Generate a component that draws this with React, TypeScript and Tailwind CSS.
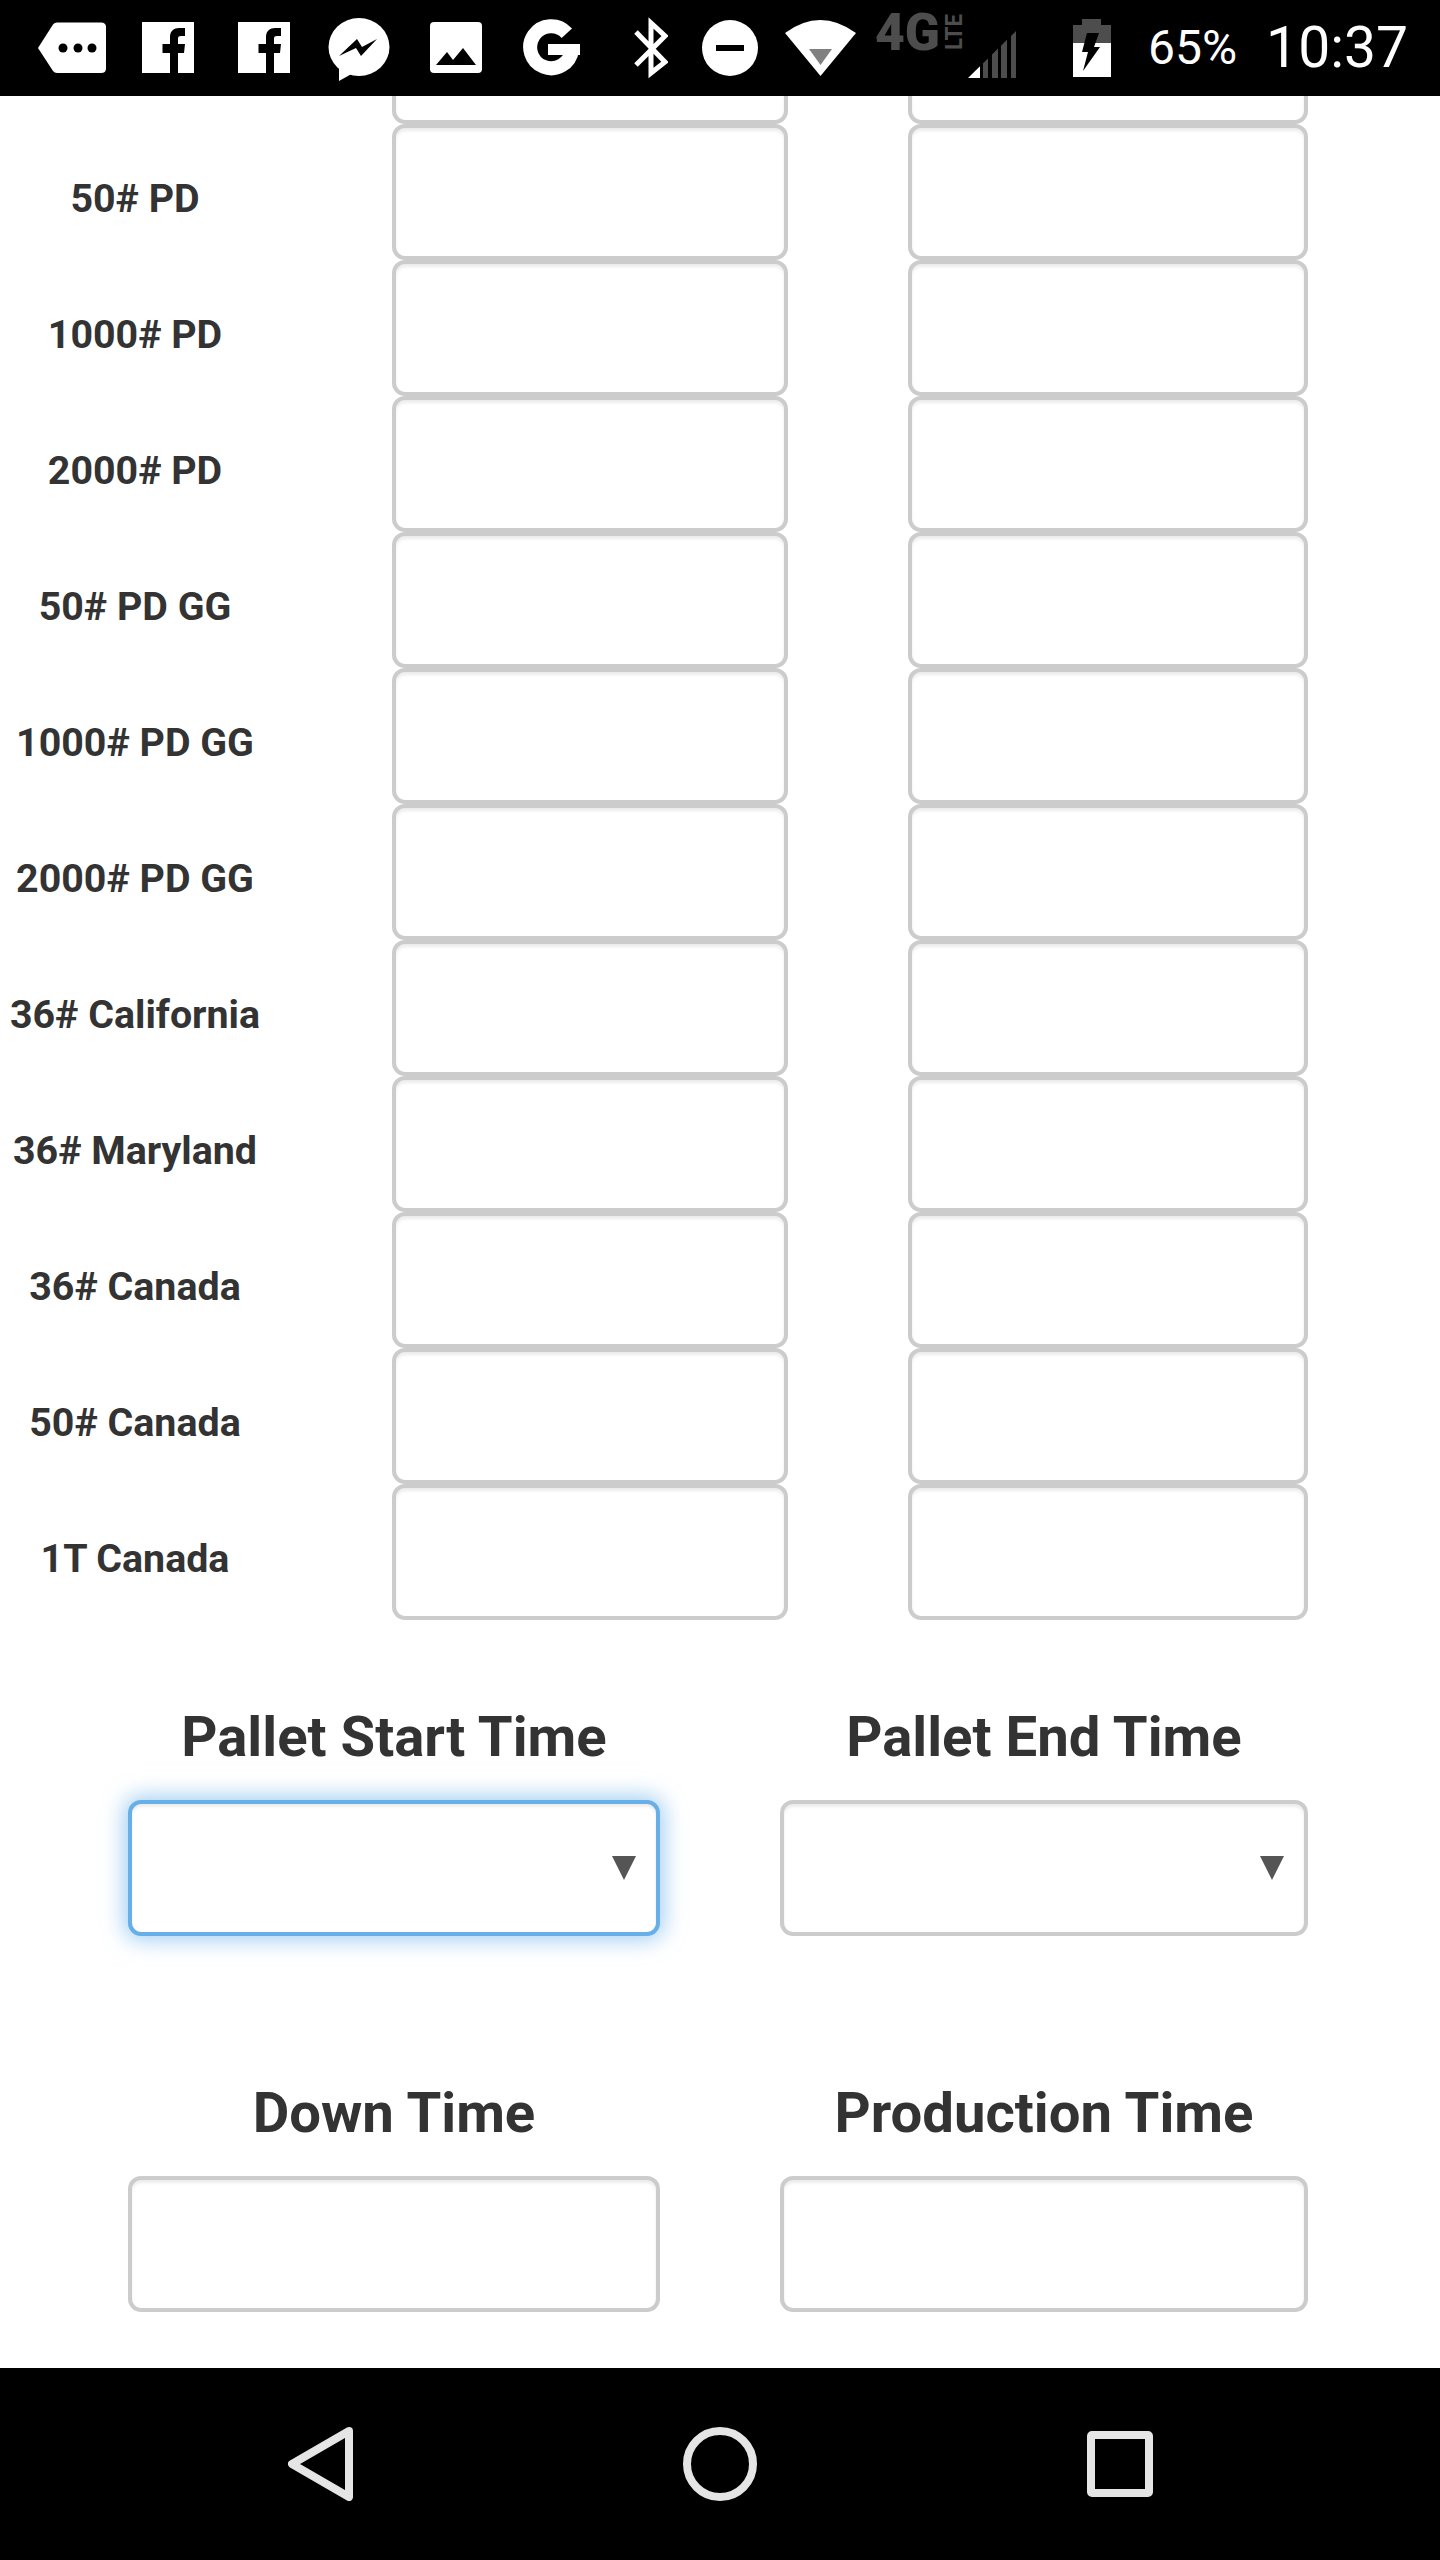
const ROWS = [
  "50# PD",
  "1000# PD",
  "2000# PD",
  "50# PD GG",
  "1000# PD GG",
  "2000# PD GG",
  "36# California",
  "36# Maryland",
  "36# Canada",
  "50# Canada",
  "1T Canada",
];

const FIELD =
  "block h-[136px] w-full rounded-[13px] border-4 border-[#cccccc] bg-white shadow-[inset_0_3px_3px_rgba(0,0,0,0.075)] outline-none";

// icons are drawn in a 96px tall box so y values equal page pixels
function FacebookIcon({ className }: { className: string }) {
  return (
    <svg className={`h-[96px] w-[52px] shrink-0 ${className}`} viewBox="0 0 52 96">
      <rect x="0" y="22" width="52" height="51" fill="#fff" />
      <path
        d="M28 73V53H20.5V44H28V37C28 31 32 28 37 28H43V36H39C36.5 36 36 37 36 39V44H43L42 53H36V73Z"
        fill="#000"
      />
    </svg>
  );
}

function StatusBar() {
  return (
    <header className="flex h-[96px] shrink-0 bg-black pl-[38px]">
      {/* tag */}
      <svg className="h-[96px] w-[68px] shrink-0" viewBox="0 0 68 96">
        <path
          d="M0 48L15 24.5Q16.5 22.5 19 22.5H63Q68 22.5 68 27V68.5Q68 73 63 73H19Q16.5 73 15 71Z"
          fill="#fff"
        />
        <circle cx="25" cy="48" r="4.5" fill="#000" />
        <circle cx="40" cy="48" r="4.5" fill="#000" />
        <circle cx="54" cy="48" r="4.5" fill="#000" />
      </svg>
      <FacebookIcon className="ml-[36px]" />
      <FacebookIcon className="ml-[44px]" />
      {/* messenger */}
      <svg className="ml-[38px] h-[96px] w-[62px] shrink-0" viewBox="0 0 62 96">
        <ellipse cx="31" cy="47" rx="30.5" ry="29" fill="#fff" />
        <path d="M11 66V81L27 72Z" fill="#fff" />
        <path d="M11 56L29 39L34 47L49 39L33 56L28 48Z" fill="#000" />
      </svg>
      {/* gallery */}
      <svg className="ml-[40px] h-[96px] w-[52px] shrink-0" viewBox="0 0 52 96">
        <rect x="0" y="22" width="52" height="51" rx="4" fill="#fff" />
        <path d="M6 65L17 52L23 60L33 48L46 65Z" fill="#000" />
      </svg>
      {/* google */}
      <svg className="ml-[41px] h-[96px] w-[57px] shrink-0" viewBox="0 0 57 96">
        <path d="M43.8 33.2A21 21 0 1 0 49 50" fill="none" stroke="#fff" strokeWidth="14" />
        <rect x="25" y="44" width="32" height="11" fill="#fff" />
      </svg>
      {/* bluetooth */}
      <svg className="ml-[53px] h-[96px] w-[35px] shrink-0" viewBox="0 0 35 96">
        <path d="M3 32L32 62L18 73V23L32 36L3 65" fill="none" stroke="#fff" strokeWidth="5" />
      </svg>
      {/* do not disturb */}
      <svg className="ml-[34px] h-[96px] w-[56px] shrink-0" viewBox="0 0 56 96">
        <circle cx="28" cy="48" r="28" fill="#fff" />
        <rect x="14" y="45" width="28" height="6" fill="#000" />
      </svg>
      {/* wifi */}
      <svg className="ml-[27px] h-[96px] w-[71px] shrink-0" viewBox="0 0 71 96">
        <path d="M0 33Q35 7 71 33L35.5 76Z" fill="#fff" />
        <path d="M24 49H47L35.5 65Z" fill="#808080" />
      </svg>
      {/* network type and signal */}
      <svg className="ml-[19px] h-[96px] w-[141px] shrink-0" viewBox="0 0 141 96">
        <text
          x="0"
          y="50"
          fontFamily="Roboto, sans-serif"
          fontWeight="900"
          fontSize="51"
          fill="#4d4d4d"
          textLength="65"
          lengthAdjust="spacingAndGlyphs"
        >
          4G
        </text>
        <text
          transform="translate(87 50) rotate(-90)"
          fontFamily="Roboto, sans-serif"
          fontWeight="700"
          fontSize="23"
          fill="#4d4d4d"
          textLength="36"
          lengthAdjust="spacingAndGlyphs"
        >
          LTE
        </text>
        <path d="M93 78L105 66.2V78Z" fill="#fff" />
        <path
          d="M108 78V63.3L113 58.4V78ZM117 78V54.5L123 48.6V78ZM126 78V45.7L132 39.8V78ZM136 78V35.9L141 31V78Z"
          fill="#4d4d4d"
        />
      </svg>
      {/* battery */}
      <svg className="ml-[57px] h-[96px] w-[38px] shrink-0" viewBox="0 0 38 96">
        <path d="M9 19H28V25H38V43H0V25H9Z" fill="#4d4d4d" />
        <rect x="0" y="43" width="38" height="34" fill="#fff" />
        <path d="M14 33H26L21 47H27L10 71L15 52H9Z" fill="#000" />
      </svg>
      <span className="ml-[37px] text-[48px] leading-[96px] font-normal text-white">65%</span>
      <span className="ml-[29px] text-[57px] leading-[96px] font-normal text-white">10:37</span>
    </header>
  );
}

function NavBar() {
  return (
    <nav className="flex h-[192px] shrink-0 items-center justify-center bg-black">
      <svg className="h-[74px] w-[65px]" viewBox="0 0 65 74">
        <path
          d="M61 4L4 37L61 70Z"
          fill="none"
          stroke="#e5e5e5"
          strokeWidth="8"
          strokeLinejoin="round"
        />
      </svg>
      <svg className="ml-[330px] h-[74px] w-[74px]" viewBox="0 0 74 74">
        <circle cx="37" cy="37" r="33" fill="none" stroke="#e5e5e5" strokeWidth="8" />
      </svg>
      <svg className="ml-[330px] h-[66px] w-[66px]" viewBox="0 0 66 66">
        <rect
          x="4"
          y="4"
          width="58"
          height="58"
          rx="1"
          fill="none"
          stroke="#e5e5e5"
          strokeWidth="8"
        />
      </svg>
    </nav>
  );
}

function Row({ label }: { label: string }) {
  return (
    <div className="flex h-[136px]">
      <label className="w-[270px] pt-[7px] text-center text-[39.375px] leading-[136px] font-bold text-[#333333]">
        {label}
      </label>
      <div className="ml-[122px] w-[396px]">
        <input type="text" className={FIELD} />
      </div>
      <div className="ml-[120px] w-[400px]">
        <input type="text" className={FIELD} />
      </div>
    </div>
  );
}

function Arrow({ className }: { className: string }) {
  return (
    <svg className={`absolute top-[56px] h-[24px] w-[24px] ${className}`} viewBox="0 0 24 24">
      <path d="M0 0H24L12 24Z" fill="#555555" />
    </svg>
  );
}

export default function App() {
  return (
    <div className="flex h-[2560px] w-[1440px] flex-col overflow-hidden bg-white font-[Roboto,sans-serif]">
      <StatusBar />

      <main className="flex-1 overflow-hidden">
        {/* row scrolled mostly out of view */}
        <div className="flex h-[28px] items-end overflow-hidden pl-[392px]">
          <div className="w-[396px] shrink-0">
            <input type="text" className={FIELD} />
          </div>
          <div className="ml-[120px] w-[400px] shrink-0">
            <input type="text" className={FIELD} />
          </div>
        </div>

        {ROWS.map((label) => (
          <Row key={label} label={label} />
        ))}

        <div className="flex pt-[85px] pl-[128px]">
          <div className="w-[532px]">
            <h2 className="mb-[31px] h-[64px] text-center text-[56.25px] leading-[64px] font-bold text-[#333333]">
              Pallet Start Time
            </h2>
            <div className="relative">
              <select className="block h-[136px] w-full appearance-none rounded-[13px] border-4 border-[#66afe9] bg-white shadow-[inset_0_3px_3px_rgba(0,0,0,0.075),0_0_21px_4px_rgba(102,175,233,0.6)] outline-none">
                <option></option>
              </select>
              <Arrow className="right-[24px]" />
            </div>
          </div>
          <div className="ml-[120px] w-[528px]">
            <h2 className="mb-[31px] h-[64px] text-center text-[56.25px] leading-[64px] font-bold text-[#333333]">
              Pallet End Time
            </h2>
            <div className="relative">
              <select className="block h-[136px] w-full appearance-none rounded-[13px] border-4 border-[#cccccc] bg-white shadow-[inset_0_3px_3px_rgba(0,0,0,0.075)] outline-none">
                <option></option>
              </select>
              <Arrow className="right-[24px]" />
            </div>
          </div>
        </div>

        <div className="flex pt-[145px] pl-[128px]">
          <div className="w-[532px]">
            <h2 className="mb-[31px] h-[64px] text-center text-[56.25px] leading-[64px] font-bold text-[#333333]">
              Down Time
            </h2>
            <input type="text" className={FIELD} />
          </div>
          <div className="ml-[120px] w-[528px]">
            <h2 className="mb-[31px] h-[64px] text-center text-[56.25px] leading-[64px] font-bold text-[#333333]">
              Production Time
            </h2>
            <input type="text" className={FIELD} />
          </div>
        </div>
      </main>

      <NavBar />
    </div>
  );
}
